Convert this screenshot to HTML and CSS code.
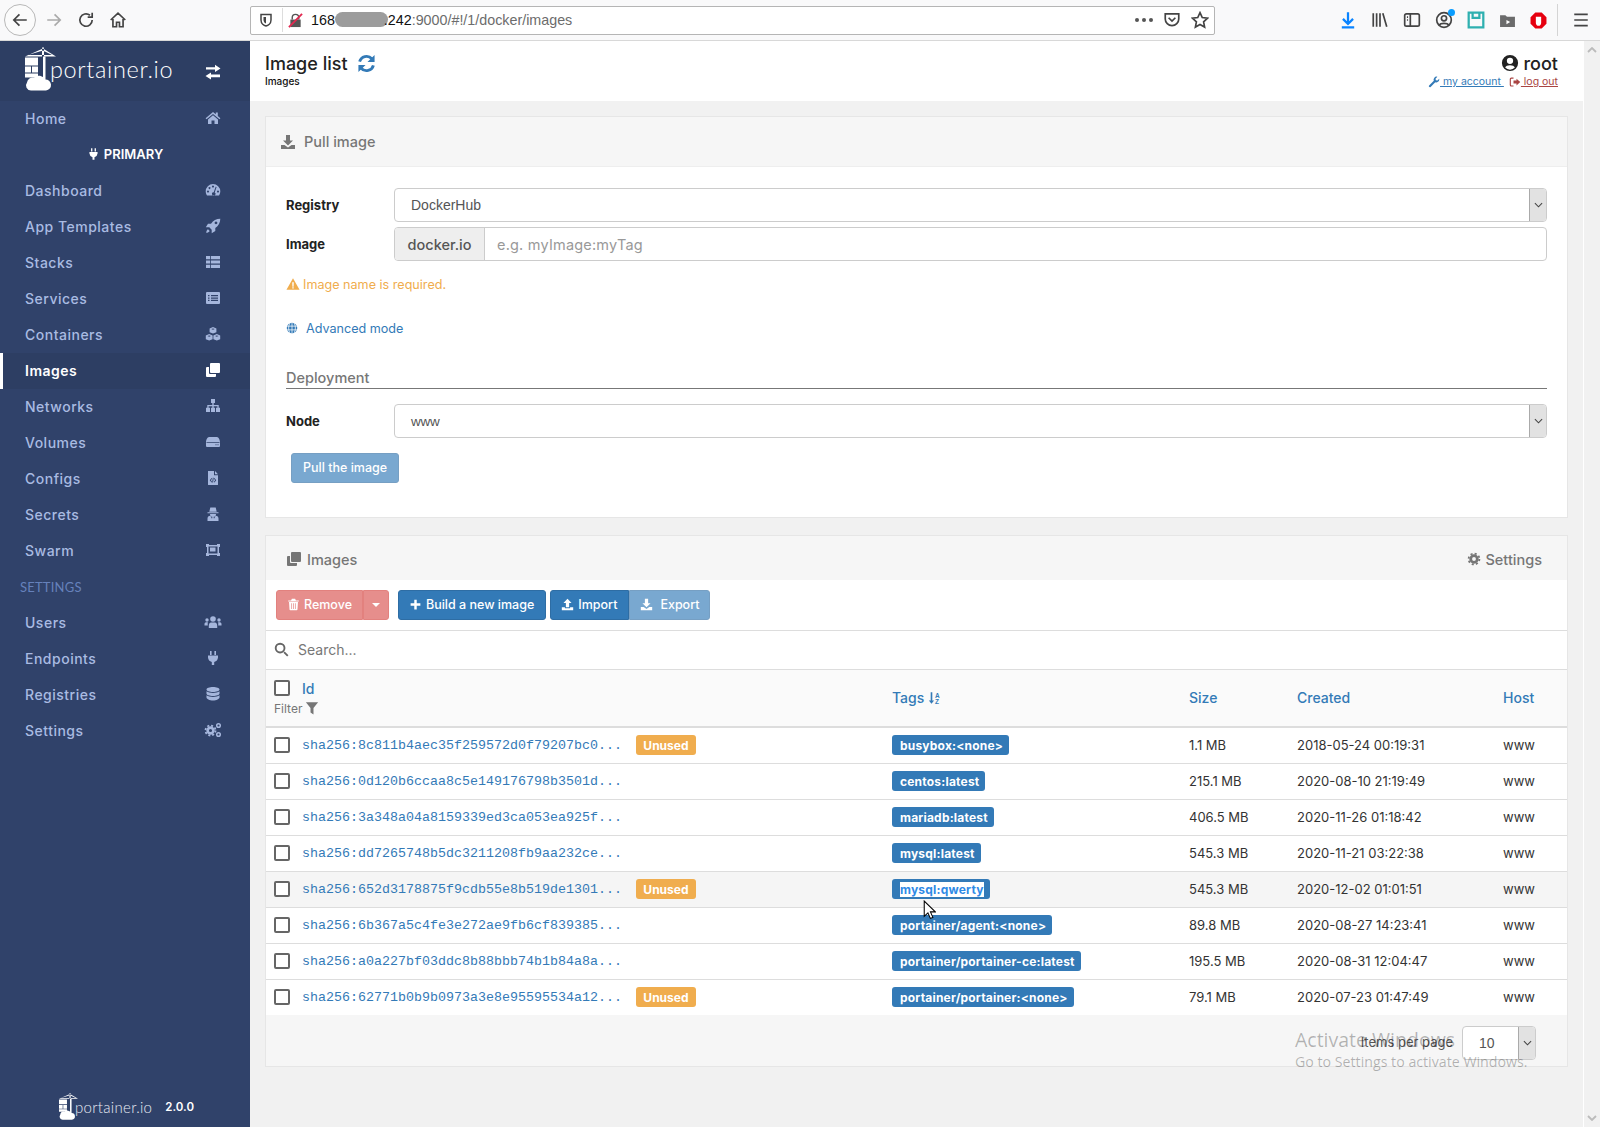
FILE: index.html
```html
<!DOCTYPE html>
<html lang="en">
<head>
<meta charset="utf-8">
<title>Portainer - Image list</title>
<link rel="stylesheet" href="styles.css">
</head>
<body>
<svg class="defs" xmlns="http://www.w3.org/2000/svg">
<symbol id="home" viewBox="0 0 16 16"><path d="M8 2 .6 8.2l.9 1.1L8 3.900l6.500 5.400.9-1.100L12.800 6V2.600h-2v1.700zM3 9.400 8 5.200l5 4.200V14H9.500v-3.400h-3V14H3z"/></symbol>
<symbol id="exchange" viewBox="0 0 16 16"><path d="M1 3.200h9V.8L15.500 4.600 10 8V5.600H1zM15 10.600H6V8.400L.5 12 6 15.600v-2.400h9z"/></symbol>
<symbol id="plug" viewBox="0 0 16 16"><path d="M5 1h1.600v4H5zM9.400 1H11v4H9.400zM3 5.500h10v2a5 5 0 0 1-3.800 4.400V15H6.800v-3.100A5 5 0 0 1 3 7.500z"/></symbol>
<symbol id="tacho" viewBox="0 0 16 16"><path fill-rule="evenodd" d="M8 2a7.300 7.300 0 0 0-7.300 7.300c0 1.500.5 3 1.300 4.200h12c.8-1.200 1.300-2.700 1.300-4.200A7.300 7.300 0 0 0 8 2zM8 3.500a1 1 0 1 1-.01 0zM4.500 5a1 1 0 1 1-.01 0zM3 8.500a1 1 0 1 1-.01 0zM13 8.500a1 1 0 1 1-.01 0zM10.700 4.800l.9.3-1.900 5.500a1.700 1.700 0 1 1-1-.3z"/></symbol>
<symbol id="rocket" viewBox="0 0 16 16"><path fill-rule="evenodd" d="M15.300.7c-4 0-7 1.800-9.300 5H3L.8 9.300h3.500l2.400 2.400v3.500l3.600-2.200v-3C13.500 7.700 15.300 4.700 15.300.7zM11 3.500a1.400 1.400 0 1 1-.01 0z"/><path d="M3 11.300c-1 .5-1.800 2-1.800 3.500 1.500 0 3-.8 3.500-1.800z"/></symbol>
<symbol id="thlist" viewBox="0 0 16 16"><path d="M1 2h4.200v3.200H1zM6 2h9v3.200H6zM1 6.400h4.200v3.200H1zM6 6.400h9v3.200H6zM1 10.800h4.200V14H1zM6 10.800h9V14H6z"/></symbol>
<symbol id="listalt" viewBox="0 0 16 16"><path fill-rule="evenodd" d="M2 2h12a1 1 0 0 1 1 1v10a1 1 0 0 1-1 1H2a1 1 0 0 1-1-1V3a1 1 0 0 1 1-1zM3 5v1.300h1.500V5zM6 5v1.300h7V5zM3 7.400v1.300h1.500V7.400zM6 7.400v1.300h7V7.400zM3 9.800v1.300h1.500V9.800zM6 9.800v1.300h7V9.800z"/></symbol>
<symbol id="cubes" viewBox="0 0 16 16"><path fill-rule="evenodd" d="M8 1l3.400 1.400v3.800L8 7.600 4.600 6.200V2.400zM8 2.400 6.200 3.100 8 3.800l1.800-.7zM4.200 8 7.600 9.400v3.800l-3.400 1.400L.8 13.200V9.400zM4.200 9.400l-1.800.7 1.800.7 1.800-.7zM11.800 8l3.400 1.400v3.800l-3.400 1.400-3.400-1.400V9.400zM11.800 9.400 10 10.100l1.800.7 1.800-.7z"/></symbol>
<symbol id="clone" viewBox="0 0 16 16"><path d="M6 1h8a1 1 0 0 1 1 1v8a1 1 0 0 1-1 1H6a1 1 0 0 1-1-1V2a1 1 0 0 1 1-1zM4 5v6a1 1 0 0 0 1 1h6v2a1 1 0 0 1-1 1H2a1 1 0 0 1-1-1V6a1 1 0 0 1 1-1z"/></symbol>
<symbol id="sitemap" viewBox="0 0 16 16"><path d="M6 1h4v4H8.700v2h5v2.800H15V14h-4V9.800h1.400V8.200H8.700v1.600H10V14H6V9.800h1.300V8.200H3.600v1.600H5V14H1V9.800h1.300V7h5V5H6z"/></symbol>
<symbol id="hdd" viewBox="0 0 16 16"><path fill-rule="evenodd" d="M4 3h8c1.500 0 3 3 3 5v4a1 1 0 0 1-1 1H2a1 1 0 0 1-1-1V8c0-2 1.500-5 3-5zM1.500 8v.8h13V8zM10.500 10.300v1h1v-1zM12.500 10.300v1h1v-1z"/></symbol>
<symbol id="filecode" viewBox="0 0 16 16"><path fill-rule="evenodd" d="M3 1h6v4.200h4v9.300a.5.5 0 0 1-.5.5h-9a.5.5 0 0 1-.5-.5zM6.500 8 4.800 10.200l1.700 2.200.6-.5-1.200-1.700L7.100 8.500zM9.500 8l-.6.5 1.200 1.700-1.200 1.700.6.500 1.700-2.200zM7.800 7.800 7.200 12.600h.9l.6-4.800z"/><path d="M10 1l3 3.200h-3z"/></symbol>
<symbol id="secret" viewBox="0 0 16 16"><path d="M5.300 1.500h5.400l1 4.300H4.300zM2.500 6.300h11v1h-11zM5 8h6a3 3 0 0 1-6 0zM2.500 15v-2.500c0-1.500 1-2.500 2.800-2.700l1.700 3 .4-1.800h1.200l.4 1.800 1.700-3c1.800.2 2.800 1.200 2.800 2.700V15z"/></symbol>
<symbol id="ungroup" viewBox="0 0 16 16"><path fill-rule="evenodd" d="M1 2h3v1h8V2h3v3h-1v6h1v3h-3v-1H4v1H1v-3h1V5H1zM3.500 4.500v7h9v-7z"/><path d="M5 5.500h5.500v4H5z"/></symbol>
<symbol id="users" viewBox="0 0 18 16"><circle cx="9" cy="5" r="2.800"/><circle cx="3" cy="6" r="1.700"/><circle cx="15" cy="6" r="1.700"/><path d="M4.800 14v-2.300C4.800 9.700 6 8.500 7 8.500h4c1 0 2.200 1.200 2.200 3.200V14zM.5 11.500V10c0-1 .8-1.800 1.500-1.800h2C3.500 9 3.800 10.500 3.800 11.500zM17.500 11.500V10c0-1-.8-1.800-1.500-1.800h-2c.5.8.2 2.300.2 3.300z"/></symbol>
<symbol id="db" viewBox="0 0 16 16"><path d="M8 1c3.500 0 6.500 1 6.500 2.500S11.500 6 8 6 1.500 5 1.500 3.500 4.500 1 8 1zM1.500 5.300C3 6.600 5.500 7 8 7s5-.4 6.500-1.700v2.200C14.500 9 11.500 10 8 10S1.500 9 1.500 7.500zM1.500 9.300C3 10.600 5.500 11 8 11s5-.4 6.500-1.700v2.200C14.500 13 11.500 14.500 8 14.500S1.500 13 1.500 11.500z"/></symbol>
<symbol id="cog" viewBox="0 0 16 16"><circle cx="8" cy="8" r="3.800" fill="none" stroke="currentColor" stroke-width="3.200"/><circle cx="8" cy="8" r="6.200" fill="none" stroke="currentColor" stroke-width="2" stroke-dasharray="2.400 2.470"/></symbol>
<symbol id="cogs" viewBox="0 0 18 16"><circle cx="6.500" cy="8.500" r="2.900" fill="none" stroke="currentColor" stroke-width="2.600"/><circle cx="6.500" cy="8.500" r="5" fill="none" stroke="currentColor" stroke-width="1.800" stroke-dasharray="2 1.930"/><circle cx="14.500" cy="3.500" r="1.800" fill="none" stroke="currentColor" stroke-width="1.500"/><circle cx="14.500" cy="12.500" r="1.800" fill="none" stroke="currentColor" stroke-width="1.500"/></symbol>
<symbol id="refresh" viewBox="0 0 16 16"><path fill="none" stroke="currentColor" stroke-width="2.400" d="M2.200 6.500A6 6 0 0 1 12.500 4M13.800 9.500A6 6 0 0 1 3.500 12"/><path d="M14.800.8v6h-6zM1.200 15.200v-6h6z"/></symbol>
<symbol id="usercircle" viewBox="0 0 16 16"><path fill-rule="evenodd" d="M8 .8a7.200 7.200 0 1 0 0 14.400A7.200 7.200 0 0 0 8 .8zM8 3.300a2.800 2.800 0 1 1 0 5.600 2.800 2.800 0 0 1 0-5.600zM3.700 12.100c.7-1.500 2.100-2.200 4.300-2.200s3.600.7 4.300 2.200A5.700 5.700 0 0 1 8 14a5.700 5.700 0 0 1-4.300-1.900z"/></symbol>
<symbol id="wrench" viewBox="0 0 16 16"><path d="M15 4.500a4 4 0 0 1-5.300 3.800l-6.200 6.200a1.400 1.400 0 0 1-2-2l6.200-6.200A4 4 0 0 1 12.500 1L10 3.500l.5 2 2 .5L15 3.500z"/></symbol>
<symbol id="signout" viewBox="0 0 16 16"><path d="M6 2H3a2 2 0 0 0-2 2v8a2 2 0 0 0 2 2h3v-1.500H3.200a.7.7 0 0 1-.7-.7V4.200c0-.4.3-.7.7-.7H6zM10 3.500 15 8l-5 4.500V10H6V6h4z"/></symbol>
<symbol id="download" viewBox="0 0 16 16"><path d="M6 1h4v5.500h3l-5 5-5-5h3zM1 11h3.500L8 13.500l3.500-2.500H15v4H1z"/></symbol>
<symbol id="upload" viewBox="0 0 16 16"><path d="M8 1l5 5h-3v5.500H6V6H3zM1 11.500h3.800v1.200h6.400v-1.200H15V15H1z"/></symbol>
<symbol id="warn" viewBox="0 0 16 16"><path fill-rule="evenodd" d="M8 1.500l7.500 13H.5zM7.100 6l.2 5h1.400l.2-5zM7.200 11.700v1.500h1.600v-1.500z"/></symbol>
<symbol id="globe" viewBox="0 0 16 16"><circle cx="8" cy="8" r="7"/><path fill="none" stroke="#fff" d="M1 5.500h14M1 10.500h14M8 1v14M5 1.500c-2 4-2 9 0 13M11 1.500c2 4 2 9 0 13"/></symbol>
<symbol id="trash" viewBox="0 0 16 16"><path fill-rule="evenodd" d="M6 1h4l1 2h3.500v1.200h-13V3H5zM2.500 5h11l-.6 9.200a1 1 0 0 1-1 .8H4.100a1 1 0 0 1-1-.8zM5.300 6.500v7h.9v-7zM7.550 6.500v7h.9v-7zM9.800 6.500v7h.9v-7z"/></symbol>
<symbol id="plus" viewBox="0 0 16 16"><path d="M6.500 2h3v4.500H14v3H9.500V14h-3V9.500H2v-3h4.500z"/></symbol>
<symbol id="search" viewBox="0 0 16 16"><circle cx="6.500" cy="6.500" r="4.700" fill="none" stroke="currentColor" stroke-width="2"/><path d="M10 11.400 11.400 10l4 4-1.400 1.400z"/></symbol>
<symbol id="filter" viewBox="0 0 16 16"><path d="M1 1.500h14L9.700 8v7.500l-3.400-2.500V8z"/></symbol>
<symbol id="sort" viewBox="0 0 16 16"><path d="M3.300 1h2v10h2.200L4.300 15 1 11h2.300z"/><text x="8.500" y="7.500" class="sort-letter">A</text><text x="8.500" y="15.500" class="sort-letter">Z</text></symbol>
</svg>

<header class="browser">
  <div class="nav-btns">
    <span class="back"><svg class="br-i" viewBox="0 0 16 16"><path d="M14 8H2.500M7.500 3 2.500 8l5 5"/></svg></span>
    <svg class="br-i muted" viewBox="0 0 16 16"><path d="M2 8h11.500M8.500 3l5 5-5 5"/></svg>
    <svg class="br-i" viewBox="0 0 16 16"><path d="M13.500 8A5.500 5.500 0 1 1 11.500 3.800M13.500 1.500v4h-4"/></svg>
    <svg class="br-i" viewBox="0 0 16 16"><path d="M1.500 8 8 2l6.500 6M3.500 7v7h3.200v-4h2.600v4h3.200V7"/></svg>
  </div>
  <div class="urlbar">
    <svg class="br-i shield" viewBox="0 0 16 16"><path d="M3 2.500h10V8c0 3.500-3 5.500-5 6-2-.5-5-2.500-5-6z"/><path d="M8 5v6.500C6.500 11 5.500 9.500 5.500 8V5z" class="solid"/></svg>
    <span class="urlsep"></span>
    <svg class="lock" viewBox="0 0 16 16"><path d="M4.500 7V5a3.500 3.500 0 0 1 7 0v2" fill="none" stroke="#555" stroke-width="1.500"/><path d="M2.500 7h11v8h-11z" fill="#555"/><path d="M1 15 15 1" stroke="#e22850" stroke-width="2"/></svg>
    <span class="url"><span class="url-host">168<span class="blur"></span>.242</span>:9000/#!/1/docker/images</span>
    <span class="url-right">
      <span class="dots"><i></i><i></i><i></i></span>
      <svg class="br-i" viewBox="0 0 16 16"><path d="M2 2.500h12V7a6 6 0 0 1-12 0zM5 6l3 3 3-3"/></svg>
      <svg class="br-i" viewBox="0 0 16 16"><path d="M8 1.500l2 4.300 4.700.6-3.500 3.200.9 4.700L8 12l-4.100 2.300.9-4.700-3.500-3.200 4.700-.6z"/></svg>
    </span>
  </div>
  <div class="tools">
    <svg class="br-i dl" viewBox="0 0 16 16"><path d="M8 1v10M3.500 7 8 11.500 12.500 7M2.500 14.500h11"/></svg>
    <svg class="br-i" viewBox="0 0 16 16"><path d="M2 2v12M5 2v12M8 2v12M10.500 2l3.500 12"/></svg>
    <svg class="br-i" viewBox="0 0 16 16"><path d="M3 2.500h10a1.500 1.500 0 0 1 1.500 1.500v8a1.500 1.500 0 0 1-1.500 1.500H3A1.500 1.500 0 0 1 1.500 12V4A1.500 1.500 0 0 1 3 2.500zM6.500 2.500v11M3.500 5.500h1M3.500 8h1"/></svg>
    <span class="acct"><svg class="br-i" viewBox="0 0 16 16"><circle cx="8" cy="8" r="6.500"/><circle cx="8" cy="6.500" r="2.300"/><path d="M3.800 12.500C5 10.500 11 10.500 12.200 12.500"/></svg><i class="acct-dot"></i></span>
    <svg class="br-i teal" viewBox="0 0 16 16"><path d="M1.500 1.500h13v13h-13zM5 1.500V6h6V1.500"/></svg>
    <svg class="fold" viewBox="0 0 16 16"><path d="M1 3h5l1.500 1.500H15V14H1z" fill="#6b6b6b"/><path d="M7 7.500v4l3.500-2z" fill="#fff"/></svg>
    <svg class="fold" viewBox="0 0 16 16"><path d="M5 .5h6L15.500 5v6L11 15.500H5L.5 11V5z" fill="#e6000f"/><path d="M5.500 4.500h5V10c0 1.800-1 3-2.500 3S5.500 11.800 5.500 10z" fill="#fff"/></svg>
    <span class="tool-sep"></span>
    <svg class="br-i" viewBox="0 0 16 16"><path d="M2 3h12M2 8h12M2 13h12"/></svg>
  </div>
</header>

<div class="app">
  <aside class="sidebar">
    <div class="side-head">
      <div class="brand">
        <svg class="logo" viewBox="0 0 31 43"><path d="M17 0h2v9h-2zM0 9 18 1l13 8zM3 7.500 18 3l9 4.500z" fill="#fff" fill-rule="evenodd"/><path d="M18 9h2.500v27H18z" fill="#fff"/><path d="M0 10h13v8H0zM0 19h6v6H0zM7 19h6v6H7zM0 26h13v4H0z" fill="#fff"/><path d="M6 43a5 5 0 0 1-4-8 6 6 0 0 1 7-5 7 7 0 0 1 11 2 5.500 5.500 0 0 1 1 11z" fill="#fff"/></svg>
        <span class="brand-text">portainer.io</span>
      </div>
      <svg class="side-i exch"><use href="#exchange"/></svg>
    </div>
    <nav class="side-nav">
      <a class="item"><span>Home</span><svg class="side-i"><use href="#home"/></svg></a>
      <div class="endpoint"><svg class="ep-i"><use href="#plug"/></svg>PRIMARY</div>
      <a class="item"><span>Dashboard</span><svg class="side-i"><use href="#tacho"/></svg></a>
      <a class="item"><span>App Templates</span><svg class="side-i"><use href="#rocket"/></svg></a>
      <a class="item"><span>Stacks</span><svg class="side-i"><use href="#thlist"/></svg></a>
      <a class="item"><span>Services</span><svg class="side-i"><use href="#listalt"/></svg></a>
      <a class="item"><span>Containers</span><svg class="side-i"><use href="#cubes"/></svg></a>
      <a class="item active"><span>Images</span><svg class="side-i"><use href="#clone"/></svg></a>
      <a class="item"><span>Networks</span><svg class="side-i"><use href="#sitemap"/></svg></a>
      <a class="item"><span>Volumes</span><svg class="side-i"><use href="#hdd"/></svg></a>
      <a class="item"><span>Configs</span><svg class="side-i"><use href="#filecode"/></svg></a>
      <a class="item"><span>Secrets</span><svg class="side-i"><use href="#secret"/></svg></a>
      <a class="item"><span>Swarm</span><svg class="side-i"><use href="#ungroup"/></svg></a>
      <div class="side-title">SETTINGS</div>
      <a class="item"><span>Users</span><svg class="side-i"><use href="#users"/></svg></a>
      <a class="item"><span>Endpoints</span><svg class="side-i"><use href="#plug"/></svg></a>
      <a class="item"><span>Registries</span><svg class="side-i"><use href="#db"/></svg></a>
      <a class="item"><span>Settings</span><svg class="side-i"><use href="#cogs"/></svg></a>
    </nav>
    <div class="side-foot">
      <svg class="logo-sm" viewBox="0 0 31 43"><path d="M17 0h2v9h-2zM0 9 18 1l13 8zM3 7.500 18 3l9 4.500z" fill="#fff" fill-rule="evenodd"/><path d="M18 9h2.500v27H18z" fill="#fff"/><path d="M0 10h13v8H0zM0 19h6v6H0zM7 19h6v6H7zM0 26h13v4H0z" fill="#fff"/><path d="M6 43a5 5 0 0 1-4-8 6 6 0 0 1 7-5 7 7 0 0 1 11 2 5.500 5.500 0 0 1 1 11z" fill="#fff"/></svg>
      <span class="foot-text">portainer.io</span>
      <span class="foot-ver">2.0.0</span>
    </div>
  </aside>

  <main class="content">
    <div class="page-head">
      <div>
        <div class="page-title">Image list <svg class="refresh"><use href="#refresh"/></svg></div>
        <div class="page-sub">Images</div>
      </div>
      <div class="userbox">
        <div class="username"><svg class="user-i"><use href="#usercircle"/></svg> root</div>
        <div class="userlinks">
          <svg class="link-i blue"><use href="#wrench"/></svg><a class="link-blue"> my account </a>
          <svg class="link-i red"><use href="#signout"/></svg><a class="link-red"> log out</a>
        </div>
      </div>
    </div>

    <section class="panel">
      <div class="panel-head"><svg class="ph-i"><use href="#download"/></svg>Pull image</div>
      <div class="panel-body">
        <div class="form-row"><label>Registry</label><div class="select"><span>DockerHub</span><b class="sel-arrow"><svg viewBox="0 0 10 6"><path d="M1 1l4 4 4-4"/></svg></b></div></div>
        <div class="form-row gap5"><label>Image</label>
          <div class="input-group"><span class="addon">docker.io</span><span class="ph">e.g. myImage:myTag</span></div>
        </div>
        <div class="err"><svg class="err-i"><use href="#warn"/></svg>Image name is required.</div>
        <div class="adv"><svg class="adv-i"><use href="#globe"/></svg>Advanced mode</div>
        <div class="section-title">Deployment</div>
        <div class="form-row node"><label>Node</label><div class="select"><span class="www">www</span><b class="sel-arrow"><svg viewBox="0 0 10 6"><path d="M1 1l4 4 4-4"/></svg></b></div></div>
        <button class="btn primary disabled pull">Pull the image</button>
      </div>
    </section>

    <section class="panel second">
      <div class="panel-head short">
        <span class="ph-left"><svg class="ph-i tight"><use href="#clone"/></svg>Images</span>
        <span class="ph-set"><svg class="set-i"><use href="#cog"/></svg>Settings</span>
      </div>
      <div class="toolbar">
        <div class="btn-group">
          <button class="btn danger disabled"><svg class="b-i"><use href="#trash"/></svg>Remove</button>
          <button class="btn danger disabled caret-btn"><i class="caret"></i></button>
        </div>
        <button class="btn primary build"><svg class="b-i"><use href="#plus"/></svg>Build a new image</button>
        <div class="btn-group">
          <button class="btn primary imp"><svg class="b-i"><use href="#upload"/></svg>Import</button>
          <button class="btn primary disabled exp"><svg class="b-i wide"><use href="#download"/></svg>Export</button>
        </div>
      </div>
      <div class="searchbar"><svg class="search-i"><use href="#search"/></svg><span>Search...</span></div>

      <div class="grid-row thead">
        <div class="idcell">
          <div class="idtop"><span class="cb"></span><a class="th">Id</a></div>
          <div class="filter">Filter <svg class="filter-i"><use href="#filter"/></svg></div>
        </div>
        <div class="th">Tags <svg class="sort-i"><use href="#sort"/></svg></div>
        <div class="th">Size</div>
        <div class="th">Created</div>
        <div class="th">Host</div>
      </div>

      <div class="grid-row"><div class="idcell row"><span class="cb"></span><a class="sha">sha256:8c811b4aec35f259572d0f79207bc0...</a><span class="unused">Unused</span></div><div><span class="tag">busybox:&lt;none&gt;</span></div><div>1.1 MB</div><div>2018-05-24 00:19:31</div><div>www</div></div>
      <div class="grid-row"><div class="idcell row"><span class="cb"></span><a class="sha">sha256:0d120b6ccaa8c5e149176798b3501d...</a></div><div><span class="tag">centos:latest</span></div><div>215.1 MB</div><div>2020-08-10 21:19:49</div><div>www</div></div>
      <div class="grid-row"><div class="idcell row"><span class="cb"></span><a class="sha">sha256:3a348a04a8159339ed3ca053ea925f...</a></div><div><span class="tag">mariadb:latest</span></div><div>406.5 MB</div><div>2020-11-26 01:18:42</div><div>www</div></div>
      <div class="grid-row"><div class="idcell row"><span class="cb"></span><a class="sha">sha256:dd7265748b5dc3211208fb9aa232ce...</a></div><div><span class="tag">mysql:latest</span></div><div>545.3 MB</div><div>2020-11-21 03:22:38</div><div>www</div></div>
      <div class="grid-row hover"><div class="idcell row"><span class="cb"></span><a class="sha">sha256:652d3178875f9cdb55e8b519de1301...</a><span class="unused">Unused</span></div><div><span class="tag"><span class="selected">mysql:qwerty</span></span></div><div>545.3 MB</div><div>2020-12-02 01:01:51</div><div>www</div></div>
      <div class="grid-row"><div class="idcell row"><span class="cb"></span><a class="sha">sha256:6b367a5c4fe3e272ae9fb6cf839385...</a></div><div><span class="tag">portainer/agent:&lt;none&gt;</span></div><div>89.8 MB</div><div>2020-08-27 14:23:41</div><div>www</div></div>
      <div class="grid-row"><div class="idcell row"><span class="cb"></span><a class="sha">sha256:a0a227bf03ddc8b88bbb74b1b84a8a...</a></div><div><span class="tag">portainer/portainer-ce:latest</span></div><div>195.5 MB</div><div>2020-08-31 12:04:47</div><div>www</div></div>
      <div class="grid-row last"><div class="idcell row"><span class="cb"></span><a class="sha">sha256:62771b0b9b0973a3e8e95595534a12...</a><span class="unused">Unused</span></div><div><span class="tag">portainer/portainer:&lt;none&gt;</span></div><div>79.1 MB</div><div>2020-07-23 01:47:49</div><div>www</div></div>

      <div class="panel-foot">
        <span class="ipp">Items per page</span>
        <div class="select small"><span>10</span><b class="sel-arrow"><svg viewBox="0 0 10 6"><path d="M1 1l4 4 4-4"/></svg></b></div>
      </div>
    </section>
  </main>

  <div class="scrollbar">
    <svg viewBox="0 0 10 6"><path d="M1 5l4-4 4 4"/></svg>
    <svg viewBox="0 0 10 6"><path d="M1 1l4 4 4-4"/></svg>
  </div>
</div>

<svg class="cursor" viewBox="0 0 12 19"><path d="M1 1v14.500l3.500-3.300 2.300 5.300 2.400-1-2.300-5.200H11.500z" fill="#fff" stroke="#000"/></svg>
<div class="activate"><div class="act1">Activate Windows</div><div class="act2">Go to Settings to activate Windows.</div></div>
</body>
</html>
```
FILE: styles.css
```css
* { box-sizing: border-box; }
html, body { margin: 0; height: 1127px; overflow: hidden; }
body { font-family: Inter, "Noto Sans", sans-serif; font-size: 13px; color: #333; background: #f1f1f1; display: flex; flex-direction: column; }
.defs { display: none; }
.sort-letter { font: 700 8px "Liberation Sans", sans-serif; fill: currentColor; }

/* browser chrome */
.browser { height: 41px; flex: none; background: #f9f9fa; border-bottom: 1px solid #d8d8d8; display: flex; align-items: center; }
.br-i { width: 18px; height: 18px; fill: none; stroke: #444; stroke-width: 1.500; flex: none; }
.br-i.muted { stroke: #aaa; }
.br-i .solid { fill: #444; stroke: none; }
.nav-btns { width: 250px; display: flex; align-items: center; gap: 14px; padding-left: 4px; flex: none; }
.back { width: 32px; height: 32px; border: 1px solid #b8b8b8; border-radius: 50%; display: flex; align-items: center; justify-content: center; background: #fbfbfb; margin-right: -5px; }
.urlbar { width: 965px; height: 29px; background: #fff; border: 1px solid #b5b5b5; border-radius: 2px; display: flex; align-items: center; padding: 0 5px 0 7px; }
.shield { width: 16px; height: 16px; }
.urlsep { width: 1px; height: 24px; background: #ddd; margin: 0 5px 0 8px; }
.lock { width: 15px; height: 15px; margin-right: 8px; flex: none; }
.url { color: #6c6c6c; font: 14.300px "Liberation Sans", sans-serif; white-space: nowrap; }
.url-host { color: #111; }
.blur { display: inline-block; width: 53px; height: 15px; margin-right: -4px; vertical-align: -2px; background: #9c9c9c; border-radius: 8px; }
.url-right { margin-left: auto; display: flex; align-items: center; gap: 10px; }
.dots { display: flex; gap: 3px; }
.dots i { width: 4px; height: 4px; border-radius: 50%; background: #555; }
.tools { margin-left: 124px; display: flex; align-items: center; gap: 14px; }
.dl { stroke: #0a84ff; stroke-width: 2; }
.teal { stroke: #2fb0b0; stroke-width: 2; }
.fold { width: 17px; height: 17px; flex: none; }
.acct { position: relative; display: flex; }
.acct-dot { position: absolute; right: -2px; top: -2px; width: 7px; height: 7px; background: #0a9dff; border-radius: 50%; }
.tool-sep { width: 1px; height: 32px; background: #d4d4d4; margin-left: -4px; }

/* layout */
.app { flex: 1; display: flex; min-height: 0; }
.sidebar { width: 250px; flex: none; background: #30426a; display: flex; flex-direction: column; }
.content { flex: 1; min-width: 0; }
.scrollbar { width: 17px; flex: none; background: #f1f1f1; border-left: 1px solid #fff; display: flex; flex-direction: column; justify-content: space-between; align-items: center; padding: 6px 0; }
.scrollbar svg { width: 10px; height: 6px; fill: none; stroke: #bbb; stroke-width: 1.800; }

/* sidebar */
.side-head { height: 60px; background: #2d3e63; display: flex; align-items: flex-start; justify-content: space-between; padding: 6px 28px 0 25px; }
.brand { display: flex; align-items: flex-end; height: 44px; }
.logo { width: 31px; height: 44px; flex: none; }
.brand-text { color: #fff; font: 300 23.500px Lato, sans-serif; line-height: 30px; letter-spacing: .65px; margin: 0 0 7px -6px; }
.side-i { width: 18px; height: 16px; fill: currentColor; color: #a5b6dc; flex: none; }
.exch { color: #fff; margin-top: 17px; }
.side-nav { display: flex; flex-direction: column; }
.item { height: 36px; display: flex; align-items: center; justify-content: space-between; padding: 0 28px 2px 25px; color: #a9bbe2; font-weight: 500; font-size: 14px; letter-spacing: .5px; }
.item.active { background: #2d3e63; color: #fff; border-left: 3px solid #fff; padding-left: 22px; font-weight: 600; }
.item.active .side-i { color: #fff; }
.endpoint { height: 36px; display: flex; align-items: center; justify-content: center; gap: 4px; color: #fff; font-size: 13px; font-weight: 600; padding-bottom: 2px; }
.ep-i { width: 13px; height: 14px; fill: #fff; }
.side-title { height: 36px; display: flex; align-items: center; padding-left: 20px; color: #6681bb; font: 13px Lato, sans-serif; letter-spacing: .2px; }
.side-foot { margin-top: auto; height: 52px; padding: 18px 0 0 59px; display: flex; align-items: flex-start; }
.logo-sm { width: 19px; height: 27px; flex: none; margin-right: -3px; }
.foot-text { color: #e8ecf5; font: 300 15px Lato, sans-serif; letter-spacing: .3px; margin: 5px 0 0; }
.foot-ver { color: #fff; font-size: 11.500px; font-weight: 600; margin: 7px 0 0 13px; }

/* page head */
.page-head { height: 60px; background: #fff; display: flex; justify-content: space-between; padding: 10px 25px 0 15px; }
.page-title { font-size: 18px; font-weight: 500; color: #222; display: flex; align-items: center; gap: 9px; height: 24px; }
.refresh { width: 19px; height: 19px; fill: #337ab7; color: #337ab7; }
.page-sub { font-size: 10px; font-weight: 500; color: #111; margin-top: 0; }
.userbox { text-align: right; }
.username { font-size: 18px; font-weight: 500; color: #222; display: flex; align-items: center; justify-content: flex-end; gap: 5px; height: 24px; }
.user-i { width: 18px; height: 18px; fill: #222; }
.userlinks { font-size: 10.500px; display: flex; justify-content: flex-end; align-items: center; white-space: pre; }
.link-blue { color: #337ab7; text-decoration: underline; margin-right: 5px; }
.link-red { color: #a94442; text-decoration: underline; }
.link-i { width: 12px; height: 12px; }
.link-i.blue { fill: #337ab7; }
.link-i.red { fill: #a94442; }

/* panels */
.panel { margin: 15px 15px 0; background: #fff; border: 1px solid #e6e6e6; }
.panel.second { margin-top: 17px; }
.panel-head { height: 50px; background: #f6f6f6; border-bottom: 1px solid #eee; display: flex; align-items: center; padding-left: 14px; color: #767676; font-size: 14.500px; font-weight: 500; }
.panel-head.short { height: 44px; border-bottom: 0; justify-content: space-between; padding: 2px 25px 0 20px; font-size: 14.500px; }
.ph-left, .ph-set { display: flex; align-items: center; }
.ph-i { width: 16px; height: 16px; fill: #767676; margin-right: 8px; }
.ph-i.tight { margin-right: 5px; }
.set-i { width: 14px; height: 14px; fill: #767676; margin-right: 4px; }
.panel-body { padding: 21px 20px 34px; }
.form-row { display: flex; align-items: center; height: 34px; }
.form-row.gap5 { margin-top: 5px; }
.form-row.node { margin-top: 15px; }
.form-row label { width: 108px; flex: none; font-weight: 700; font-size: 13px; color: #222; padding-bottom: 1px; }
.select { flex: 1; height: 34px; border: 1px solid #ccc; border-radius: 4px; background: #fff; display: flex; align-items: center; justify-content: space-between; padding-left: 16px; font: 14px "Liberation Sans", sans-serif; color: #555; }
.www { font-size: 13.500px; letter-spacing: -.3px; }
.sel-arrow { width: 17px; height: 32px; background: #e2e2e2; border-left: 1px solid #aaa; border-radius: 0 3px 3px 0; display: flex; align-items: center; justify-content: center; }
.sel-arrow svg { width: 9px; height: 6px; fill: none; stroke: #444; stroke-width: 1.200; }
.input-group { flex: 1; height: 34px; border: 1px solid #ccc; border-radius: 4px; display: flex; align-items: center; }
.addon { width: 90px; height: 32px; background: #eee; border-right: 1px solid #ccc; display: flex; align-items: center; justify-content: center; font-size: 14.500px; font-weight: 500; color: #555; border-radius: 3px 0 0 3px; }
.ph { padding-left: 12px; color: #999; font-size: 14.500px; letter-spacing: .2px; }
.err { margin-top: 13px; height: 20px; display: flex; align-items: center; color: #f0ad4e; font-size: 12.600px; }
.err-i { width: 14px; height: 14px; fill: #f0ad4e; margin-right: 3px; }
.adv { margin-top: 24px; height: 20px; display: flex; align-items: center; color: #337ab7; font-size: 12.600px; }
.adv-i { width: 12px; height: 12px; fill: #337ab7; margin-right: 8px; }
.section-title { margin-top: 30px; height: 21px; border-bottom: 1px solid #777; font-size: 14.500px; font-weight: 500; color: #777; line-height: 20px; }
.btn { height: 30px; border: 1px solid transparent; border-radius: 3px; color: #fff; font-family: inherit; font-size: 12.500px; font-weight: 500; padding: 0 10px 1px; display: inline-flex; align-items: center; white-space: nowrap; }
.btn.primary { background: #337ab7; border-color: #2e6da4; }
.btn.danger { background: #d9534f; border-color: #d43f3a; }
.btn.disabled { opacity: .65; }
.pull { margin: 15px 0 0 5px; padding: 0 11px 1px; }
.toolbar { height: 51px; border-bottom: 1px solid #ddd; padding: 10px 0 0 10px; display: flex; align-items: flex-start; }
.btn-group { display: flex; }
.btn-group .btn:first-child:not(:last-child) { border-radius: 3px 0 0 3px; }
.btn-group .btn:last-child:not(:first-child) { border-radius: 0 3px 3px 0; }
.caret-btn { width: 26px; justify-content: center; padding: 0; }
.caret { width: 0; height: 0; border: 4px solid transparent; border-top-color: #fff; border-bottom: 0; }
.build { margin: 0 4px 0 9px; padding: 0 11px 1px 10px; }
.imp { padding: 0 11px 1px 10px; }
.exp { padding: 0 10px 1px; }
.b-i { width: 13px; height: 13px; fill: #fff; margin-right: 4px; flex: none; }
.b-i.wide { margin-right: 7px; }
.searchbar { height: 39px; border-bottom: 1px solid #ddd; display: flex; align-items: center; padding: 0 0 1px 8px; color: #777; font-size: 14px; }
.search-i { width: 15px; height: 15px; fill: #666; color: #666; margin-right: 9px; }
.grid-row { display: grid; grid-template-columns: 626px 297px 108px 206px 1fr; align-items: center; height: 36px; padding-bottom: 1px; border-bottom: 1px solid #ddd; color: #333; font-size: 13px; }
.grid-row.hover { background: #f5f5f5; }
.grid-row.last { height: 35px; border-bottom: 0; }
.grid-row.thead { height: 58px; background: #fafafa; border-bottom: 2px solid #ddd; }
.idcell { padding-left: 8px; }
.idcell.row { display: flex; align-items: center; }
.idtop { display: flex; align-items: center; }
.cb { width: 16px; height: 16px; border: 2px solid #666; border-radius: 2px; background: #fff; flex: none; margin-right: 12px; }
.th { color: #337ab7; font-weight: 500; font-size: 14px; display: flex; align-items: center; gap: 4px; }
.sort-i { width: 13px; height: 14px; fill: #337ab7; color: #337ab7; }
.filter { color: #767676; font-size: 12px; display: flex; align-items: center; gap: 3px; margin-top: 4px; }
.filter-i { width: 14px; height: 14px; fill: #767676; }
.sha { color: #337ab7; font: 13.330px "Liberation Mono", monospace; white-space: nowrap; }
.unused { margin-left: 14px; width: 60px; height: 20px; background: #f0ad4e; border-radius: 3px; color: #fff; font-size: 12px; font-weight: 700; display: flex; align-items: center; justify-content: center; }
.tag { display: inline-flex; align-items: center; height: 20px; padding: 0 6px 0 8px; background: #337ab7; color: #fff; font-size: 12px; font-weight: 700; border-radius: 3px; white-space: nowrap; letter-spacing: .2px; }
.selected { background: #fff; color: #2f8ae6; }
.panel-foot { height: 51px; background: #f6f6f6; display: flex; align-items: flex-start; justify-content: flex-end; padding: 11px 31px 0 0; }
.ipp { font-size: 13px; color: #555; margin: 8px 9px 0 0; }
.select.small { flex: none; width: 74px; padding-left: 16px; font-size: 14px; }
.cursor { position: absolute; left: 923px; top: 900px; width: 13px; height: 20px; }
.activate { position: absolute; left: 1295px; top: 1026px; color: rgba(0,0,0,.28); font-family: "Open Sans", sans-serif; white-space: nowrap; }
.act1 { font-size: 19.500px; line-height: 27px; }
.act2 { font-size: 14.200px; line-height: 20px; margin-top: -1px; }
```
